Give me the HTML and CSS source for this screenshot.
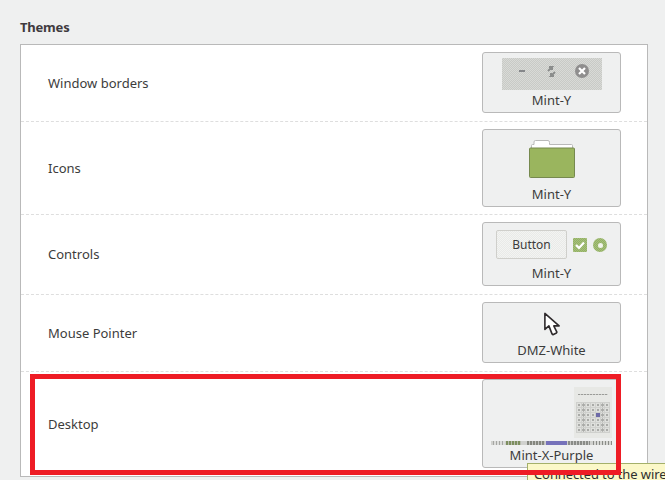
FILE: index.html
```html
<!DOCTYPE html>
<html>
<head>
    <title>Themes</title>
    <link rel="stylesheet" href="styles.css">
</head>
<body>
    <div class="content">
        <h2 class="section-title">Themes</h2>
        <div class="panel">
            <div class="row">
                <span class="row-label">Window borders</span>
                <button class="theme-btn">
                    <div class="preview preview-window">
                        <svg class="window-icons" width="100" height="32" viewBox="0 0 100 32">
                            <rect x="17" y="12" width="6" height="2" fill="#85878a"/>
                            <path d="M46 14l4-4h-3M50 10v3M53 15l-4 4h3M49 19v-3" transform="translate(0 -1)" stroke="#8b8d8c" stroke-width="2" fill="none"/>
                            <circle cx="80" cy="13" r="7" fill="#8f8e8e"/>
                            <path d="M77 10l6 6M83 10l-6 6" stroke="#fff" stroke-width="2.2"/>
                        </svg>
                    </div>
                    <span class="theme-name">Mint-Y</span>
                </button>
            </div>
            <div class="row row-tight">
                <span class="row-label">Icons</span>
                <button class="theme-btn">
                    <div class="preview preview-folder">
                        <svg width="46" height="38" viewBox="0 0 46 38">
                            <path d="M2.500 10V5.500q0-1 1-1H5V2q0-1.500 1.500-1.500H19q1.500 0 1.500 2v2h22q1 0 1 1V10z" fill="#fff" stroke="#b9b9b9"/>
                            <rect x="0.500" y="8" width="45" height="29.500" rx="1" fill="#9ab55e" stroke="#76894f"/>
                        </svg>
                    </div>
                    <span class="theme-name">Mint-Y</span>
                </button>
            </div>
            <div class="row">
                <span class="row-label">Controls</span>
                <button class="theme-btn">
                    <div class="preview preview-controls">
                        <span class="sample-button">Button</span>
                        <span class="sample-check">
                            <svg width="14" height="14" viewBox="0 0 14 14"><path d="M3 7l3 3 5-5.500" stroke="#fff" stroke-width="2.200" fill="none"/></svg>
                        </span>
                        <span class="sample-radio"></span>
                    </div>
                    <span class="theme-name">Mint-Y</span>
                </button>
            </div>
            <div class="row">
                <span class="row-label">Mouse Pointer</span>
                <button class="theme-btn">
                    <div class="preview preview-cursor">
                        <svg width="18" height="28" viewBox="0 0 18 28">
                            <path d="M1 1v18l4.500-4 3.500 9 1 1 4-2 .5-1-3.500-7h6z" fill="#fff" stroke="#2e2a2c" stroke-width="1.800" stroke-linejoin="round"/>
                        </svg>
                    </div>
                    <span class="theme-name">DMZ-White</span>
                </button>
            </div>
            <div class="row">
                <span class="row-label">Desktop</span>
                <button class="theme-btn">
                    <div class="preview preview-desktop">
                        <div class="mini-calendar">
                            <div class="mini-line mini-line-dark"></div>
                            <div class="mini-line mini-line-dark"></div>
                            <div class="mini-line"></div>
                            <div class="mini-days">
                                <i></i><i></i><i></i><i></i><i></i><i></i><i></i>
                                <i></i><i></i><i></i><i></i><i></i><i></i><i></i>
                                <i></i><i></i><i></i><i></i><i class="today"></i><i></i><i></i>
                                <i></i><i></i><i></i><i></i><i></i><i></i><i></i>
                                <i></i><i></i><i></i><i></i><i></i><i></i><i></i>
                                <i></i><i></i><i></i><i></i><i></i><i></i><i></i>
                            </div>
                            <div class="mini-line mini-line-short"></div>
                        </div>
                        <div class="mini-panel">
                            <span class="mini-task mini-task-a"></span>
                            <span class="mini-task mini-task-b"></span>
                            <span class="mini-task mini-task-c"></span>
                            <span class="mini-task mini-task-active"></span>
                            <span class="mini-task mini-task-d"></span>
                            <span class="mini-task mini-task-e"></span>
                        </div>
                    </div>
                    <span class="theme-name">Mint-X-Purple</span>
                </button>
            </div>
        </div>
    </div>
    <div class="tooltip">Connected to the wire</div>
    <div class="highlight"></div>
</body>
</html>
```

FILE: styles.css
```css
html, body {
    height: 100%;
}
body {
    margin: 0;
    background: #eff0f0;
    color: #3c3c3c;
    font-family: "Noto Sans", sans-serif;
    font-size: 13px;
    overflow: hidden;
    position: relative;
}
.content {
    padding: 19px 17px 0 20px;
}
.section-title {
    margin: 0 0 9px;
    font-size: 13px;
    line-height: 16px;
    font-weight: 700;
    letter-spacing: -0.2px;
    color: #403a3e;
}
.panel {
    background: #fff;
    border: 1px solid #b9b9b9;
}
.row {
    display: flex;
    align-items: center;
    justify-content: space-between;
    padding: 7px 26px 8px 27px;
    border-bottom: 1px dashed #dedede;
}
.row:last-child {
    border-bottom: none;
}
.row-tight {
    padding-bottom: 7px;
}
.row-label {
    line-height: 16px;
}
.theme-btn {
    box-sizing: border-box;
    width: 139px;
    padding: 5px 0 4px;
    display: flex;
    flex-direction: column;
    align-items: center;
    gap: 2px;
    background: #eff0f0;
    border: 1px solid #b9b9b9;
    border-radius: 3px;
    font: inherit;
    color: inherit;
}
.theme-name {
    line-height: 16px;
}
.preview {
    display: flex;
}
.preview-window {
    width: 100px;
    height: 32px;
    background-color: #d0d2ce;
    background-image: conic-gradient(#c8cac6 25%, #d9dad7 0 50%, #c8cac6 0 75%, #d9dad7 0);
    background-size: 2px 2px;
}
.preview-folder {
    height: 49px;
    padding-top: 5px;
    box-sizing: border-box;
}
.preview-controls {
    height: 35px;
    width: 111px;
    gap: 6px;
    padding-top: 2px;
    box-sizing: border-box;
    align-items: flex-start;
}
.sample-button {
    box-sizing: border-box;
    flex: none;
    width: 71px;
    height: 29px;
    font-size: 12px;
    line-height: 27px;
    text-align: center;
    border: 1px solid #cfcfcb;
    border-radius: 2px;
    background-color: #eeefed;
    background-image: conic-gradient(#e9eae8 25%, #f3f4f2 0 50%, #e9eae8 0 75%, #f3f4f2 0);
    background-size: 2px 2px;
}
.sample-check {
    display: flex;
    flex: none;
    width: 14px;
    height: 14px;
    margin-top: 8px;
    border-radius: 1px;
    background-image: conic-gradient(#93b163 25%, #a5bf7c 0 50%, #93b163 0 75%, #a5bf7c 0);
    background-size: 2px 2px;
}
.sample-radio {
    display: flex;
    align-items: center;
    justify-content: center;
    flex: none;
    width: 14px;
    height: 14px;
    margin-top: 8px;
    border-radius: 50%;
    background-image: conic-gradient(#93b163 25%, #a5bf7c 0 50%, #93b163 0 75%, #a5bf7c 0);
    background-size: 2px 2px;
}
.sample-radio::after {
    content: "";
    width: 5px;
    height: 5px;
    border-radius: 50%;
    background: #f2f4ec;
}
.preview-cursor {
    height: 32px;
    padding-top: 3px;
    box-sizing: border-box;
    width: 16px;
    justify-content: center;
}
.preview-desktop {
    width: 121px;
    height: 60px;
    flex-direction: column;
    align-items: flex-end;
    justify-content: space-between;
    padding-top: 2px;
    box-sizing: border-box;
}
.mini-calendar {
    box-sizing: border-box;
    width: 38px;
    height: 51px;
    padding: 2px 2px 1px;
    background: #e7e8e5;
    display: flex;
    flex-direction: column;
    gap: 2px;
}
.mini-line {
    height: 2px;
    margin: 1px 2px;
    background: repeating-linear-gradient(90deg, #c3c4c1 0 2px, #dcdddb 2px 3px);
}
.mini-line-dark {
    background: repeating-linear-gradient(90deg, #9a9b98 0 2px, #cfd0cd 2px 3px);
}
.mini-line-short {
    margin-right: 10px;
    background: repeating-linear-gradient(90deg, #aeafac 0 2px, #d6d7d4 2px 3px);
}
.mini-days {
    display: grid;
    grid-template-columns: repeat(7, 1fr);
    grid-auto-rows: 4px;
    gap: 1px;
    padding: 1px;
    background: #cfd0cd;
    flex: 1;
}
.mini-days i {
    background: radial-gradient(#a9aaa7 1px, #dfe0dd 1.500px);
}
.mini-days .today {
    background: #6d6aa8;
}
.mini-panel {
    width: 121px;
    height: 4px;
    display: flex;
    gap: 1px;
    background: #d0d1ce;
}
.mini-task {
    height: 4px;
    background-size: 3px 4px;
}
.mini-task-a {
    width: 12px;
    margin-left: 2px;
    background-image: linear-gradient(90deg, #a5a6a3 1px, #dcdddb 1px);
}
.mini-task-b {
    width: 16px;
    background-image: linear-gradient(90deg, #7d8f5f 2px, #b9bdb0 2px);
}
.mini-task-c {
    width: 18px;
    margin-left: 5px;
    background-image: linear-gradient(90deg, #85877f 2px, #c1c2bf 2px);
}
.mini-task-active {
    width: 22px;
    background-color: #7672ba;
}
.mini-task-d {
    width: 22px;
    background-image: linear-gradient(90deg, #8a8c88 2px, #c5c6c3 2px);
}
.mini-task-e {
    width: 20px;
    margin-left: 2px;
    background-image: linear-gradient(90deg, #8a8c88 1px, #d6d7d4 1px);
}
.tooltip {
    position: absolute;
    left: 527px;
    right: -1px;
    top: 463px;
    height: 40px;
    box-sizing: border-box;
    padding: 2px 0 0 6px;
    line-height: 16px;
    letter-spacing: -0.1px;
    white-space: nowrap;
    background: #fbf8c8;
    border: 1px solid #a4b06a;
    color: #2f2f2f;
}
.highlight {
    position: absolute;
    left: 30px;
    top: 374px;
    width: 591px;
    height: 101px;
    box-sizing: border-box;
    border: 5px solid #ee1c25;
}
```
